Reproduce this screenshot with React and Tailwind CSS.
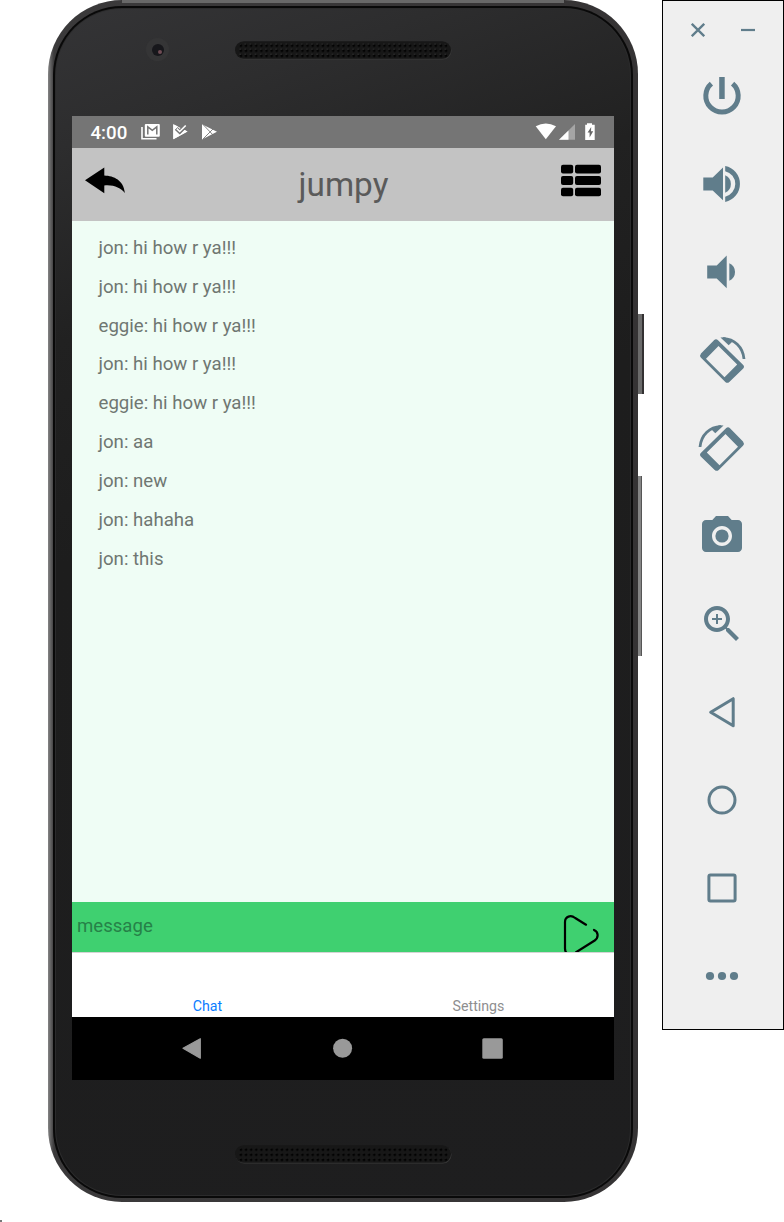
import React from "react";

const MESSAGES = [
  ["jon", "hi how r ya!!!"],
  ["jon", "hi how r ya!!!"],
  ["eggie", "hi how r ya!!!"],
  ["jon", "hi how r ya!!!"],
  ["eggie", "hi how r ya!!!"],
  ["jon", "aa"],
  ["jon", "new"],
  ["jon", "hahaha"],
  ["jon", "this"],
];

function Grille({ id, dot, glint }) {
  return (
    <svg width="217" height="19" viewBox="0 0 217 19" className="block">
      <defs>
        <pattern id={id} x="3.4" y="2" width="5.13" height="5.1" patternUnits="userSpaceOnUse">
          <circle cx="2.5" cy="2.6" r="1.35" fill={dot} />
          <rect x="1.2" y="0.6" width="1.2" height="0.8" fill={glint} />
        </pattern>
      </defs>
      <rect x="0.5" y="0.9" width="216" height="17.6" rx="8.8" fill="#3a3a3a" />
      <rect x="0" y="0.2" width="216" height="17.6" rx="8.8" fill="#171717" />
      <rect x="3.4" y="2" width="210.3" height="15.3" rx="6" fill={`url(#${id})`} />
    </svg>
  );
}

function StatusBar() {
  return (
    <div className="flex h-8 items-center justify-between bg-[#757575] pl-[18.500px] pr-[19px] text-white">
      <div className="flex items-center">
        <span className="w-[49.500px] pt-0.5 text-[18.700px] leading-[31px] font-medium">4:00</span>
        <svg width="80" height="32" viewBox="140 116 80 32" fill="none">
          <path d="M142 127V138.800H156.500" stroke="#fff" strokeWidth="1.600" />
          <rect x="144.800" y="124" width="15" height="12.700" rx="1" fill="#fff" />
          <path d="M147.800 134.500V126.800L152.300 130.300L156.800 126.800V134.500" stroke="#757575" strokeWidth="1.500" />
          <path d="M173.300 124.200L187.500 131.500L173.300 139.200Z" fill="#fff" />
          <path d="M176.300 128.200L179.700 131.600L187.500 123.800" stroke="#757575" strokeWidth="3.600" />
          <path d="M173.300 124.200L178 126.600L174.800 129.700L179.700 134.600L184.500 129.900L187.500 131.500L173.300 139.200Z" fill="#fff" />
          <path d="M176 129L179.700 132.500L186 126.300" stroke="#757575" strokeWidth="3" />
          <path d="M176.800 128.700L179.700 131.500L185.700 125.500" stroke="#fff" strokeWidth="1.600" />
          <path d="M202 124.200L217 131.800L202 139.500Z" fill="#fff" />
          <path d="M203 124.500L215 137M203 139L215 127" stroke="#757575" strokeWidth="0.900" />
        </svg>
      </div>
      <svg width="60" height="32" viewBox="535 116 60 32">
        <path d="M535.700 126.300Q545.800 120.500 556 126.300L545.800 139.200Z" fill="#fff" />
        <path d="M575 124V139.700H559Z" fill="#a5a5a5" />
        <path d="M568.500 130.400V139.700H559Z" fill="#fff" />
        <path d="M587 123.300h5v1.500h2.700v15.200h-9.500v-15.200h1.800z" fill="#fff" />
        <path d="M591.200 127l-3.600 5.600h2v5l3.600-6.300h-2.200z" fill="#666" />
      </svg>
    </div>
  );
}

function Header() {
  return (
    <header className="flex h-[73px] items-start justify-between bg-[#c3c3c3] px-[13px] pt-4">
      <svg width="42" height="32" viewBox="85 164 42 32">
        <path d="M85 180.300L104.300 167.400V175.500C114 176 123.500 180 124.900 193C120.500 188 114 184.600 104.300 185.500V193.200Z" />
      </svg>
      <h1 className="text-[33.300px] leading-[41px] text-[#5a5a5a]">jumpy</h1>
      <svg width="41" height="33" viewBox="560 164 41 33">
        <rect x="561" y="164.700" width="12.200" height="8.700" rx="2" />
        <rect x="575" y="164.700" width="26" height="8.700" rx="2" />
        <rect x="561" y="176" width="12.200" height="9" rx="2" />
        <rect x="575" y="176" width="26" height="9" rx="2" />
        <rect x="561" y="187.700" width="12.200" height="8.500" rx="2" />
        <rect x="575" y="187.700" width="26" height="8.500" rx="2" />
      </svg>
    </header>
  );
}

function Screen() {
  return (
    <div className="flex h-[964px] w-[542px] flex-col bg-black">
      <StatusBar />
      <Header />
      <main className="h-[681px] bg-[#effdf5] pt-2 pl-[26.500px]">
        {MESSAGES.map(([who, text], i) => (
          <p key={i} className="h-[38.820px] text-[18.640px] leading-[39px] text-[#6f7772]">
            {who}: {text}
          </p>
        ))}
      </main>
      <div className="flex h-[50px] justify-between overflow-hidden bg-[#3fd070] pl-[5px] pr-3">
        <span className="text-[18.600px] leading-[49px] text-[#268148]">message</span>
        <svg width="40" height="50" viewBox="562 902 40 50" fill="none" stroke="#000" strokeWidth="2.200" strokeLinecap="round" strokeLinejoin="round">
          <path d="M586 924.700L575.200 918C570.700 914.500 565 916.500 565 922V948.500C565 954 570.700 956.500 575.700 952.500L594.700 940.500C598.700 937.500 598.700 932 594 930" />
        </svg>
      </div>
      <nav className="flex h-[65px] items-end border-t border-[#d4d4d4] bg-white text-center text-[14.200px] leading-[22px]">
        <span className="flex-1 text-[#0a7cff]">Chat</span>
        <span className="flex-1 text-[#8e8e8f]">Settings</span>
      </nav>
      <div className="flex h-[63px] items-center bg-black pl-[109px]">
        <svg width="324" height="24" viewBox="181 1037 324 24" fill="#999">
          <path d="M183 1048.300L200.300 1038.700V1058.200Z" stroke="#999" strokeWidth="1.200" strokeLinejoin="round" />
          <circle cx="342.600" cy="1048.300" r="9.500" />
          <rect x="482.300" y="1038.200" width="20.500" height="20.500" rx="1.500" />
        </svg>
      </div>
    </div>
  );
}

function Phone() {
  return (
    <div className="relative ml-12 h-[1202px] w-[590px] shrink-0 rounded-[74px] bg-linear-to-r from-[#858585] via-[#3b3a3b] via-[1%] to-[#353334] pt-[6px] pr-[5px] pb-[4px] pl-[5px]">
      <div className="absolute top-[314px] left-[590px] flex h-20 w-1.5 bg-[#6b6b6b]">
        <div className="ml-auto w-0.5 bg-[#333132]" />
      </div>
      <div className="absolute top-[476px] left-[590px] h-[180px] w-1 border-r border-[#555] bg-[#858585]" />
      <div className="absolute top-0 left-[74px] h-[3px] w-[442px] bg-[#686868]" />
      <div className="h-full rounded-[69px] bg-[#090909] p-0.5">
        <div className="h-full rounded-[67px] bg-[#2b2b2c] p-px">
          <div className="flex h-full flex-col items-center rounded-[66px] bg-linear-[160deg,#343436_0%,#2d2d2e_10%,#212121_24%,#1d1d1d_40%,#1e1e1f_100%]">
            <div className="flex h-[107px] w-full items-start pt-[32px] pl-[90px]">
              <div className="-mt-[3px] flex h-[23px] w-[23px] items-center justify-center rounded-full bg-[#353536]">
                <div className="flex h-3 w-3 items-center justify-end rounded-full bg-[#17171b] pr-0.5">
                  <div className="mt-1 h-1 w-1 rounded-full bg-[#704c54]" />
                </div>
              </div>
              <div className="ml-[66px]">
                <Grille id="ear" dot="#030303" glint="#3b3b3b" />
              </div>
            </div>
            <Screen />
            <div className="pt-[65px]">
              <Grille id="mouth" dot="#020202" glint="#1d1d1d" />
            </div>
          </div>
        </div>
      </div>
    </div>
  );
}

function Tool({ children, flip }) {
  return (
    <button className="flex h-[88px] items-center justify-center pr-0.5">
      <svg width="48" height="48" viewBox="0 0 48 48" fill="currentColor" className={flip ? "-scale-x-100 overflow-visible" : "overflow-visible"}>
        {children}
      </svg>
    </button>
  );
}

function RotateGlyph() {
  return (
    <>
      <path fillRule="evenodd" d="M16 4.200Q18 2.300 20 4.200L45 28.700Q47 30.800 45 32.800L31.300 46Q29.300 47.700 27.300 46L3 21.800Q1.200 19.700 3 17.500ZM20.500 10L8 22.700L26.500 41.200L39.200 28.500Z" />
      <path d="M25 2.600C36 2.400 45 11 46 23" fill="none" stroke="currentColor" strokeWidth="2.800" />
      <path d="M22.500 1.400L30.700 9.300L34.500 5.500L27 1.300Z" />
    </>
  );
}

function Toolbar() {
  return (
    <aside className="ml-6 flex h-[1030px] w-[122px] shrink-0 flex-col border border-black bg-[#efefef] text-[#607d8b]">
      <div className="flex h-[51px] items-center justify-between pt-[7px] pr-7 pl-7">
        <svg width="14" height="14" viewBox="0 0 14 14" stroke="currentColor" strokeWidth="2.300">
          <path d="M0.800 0.800L13.200 13.200M13.200 0.800L0.800 13.200" />
        </svg>
        <svg width="14" height="14" viewBox="0 0 14 14">
          <path d="M0 7H14" stroke="currentColor" strokeWidth="2.200" />
        </svg>
      </div>
      <Tool>
        <path d="M13.400 11.600A16.200 16.200 0 1 0 34.600 11.600" fill="none" stroke="currentColor" strokeWidth="5" />
        <rect x="21.200" y="5" width="5.500" height="22" />
      </Tool>
      <Tool>
        <path d="M5.300 17.400H14.700L25 7.500V40.200L14.700 30.400H5.300Z" />
        <path d="M27.200 15.300A9.500 9.500 0 0 1 27.200 32.700Z" />
        <path d="M27.200 6A18.300 18.300 0 0 1 27.200 41.900V36.700A13.100 13.100 0 0 0 27.200 11.200Z" />
      </Tool>
      <Tool>
        <path d="M9.200 17.400H18.700L28.700 7.500V40.200L18.700 30.500H9.200Z" />
        <path d="M31.300 15.300A9.500 9.500 0 0 1 31.300 32.700Z" />
      </Tool>
      <Tool><RotateGlyph /></Tool>
      <Tool flip><RotateGlyph /></Tool>
      <Tool>
        <g transform="scale(2)">
          <circle cx="12" cy="12" r="3.300" />
          <path d="M9 2L7.170 4H4c-1.100 0-2 .9-2 2v12c0 1.100.9 2 2 2h16c1.100 0 2-.9 2-2V6c0-1.100-.9-2-2-2h-3.170L15 2H9zm3 15c-2.760 0-5-2.240-5-5s2.240-5 5-5 5 2.240 5 5-2.240 5-5 5z" />
        </g>
      </Tool>
      <Tool>
        <path transform="scale(2)" d="M15.500 14h-.79l-.28-.27C15.410 12.590 16 11.110 16 9.500 16 5.910 13.090 3 9.500 3S3 5.910 3 9.500 5.910 16 9.500 16c1.610 0 3.090-.59 4.230-1.570l.27.28v.79l5 4.990L20.490 19l-4.990-5zm-6 0C7.010 14 5 11.990 5 9.500S7.010 5 9.500 5 14 7.010 14 9.500 11.990 14 9.500 14zM12 10h-2v2H9v-2H7V9h2V7h1v2h2v1z" />
      </Tool>
      <Tool>
        <path d="M12.700 24.300L35.200 10.700V37.700Z" fill="none" stroke="currentColor" strokeWidth="3" strokeLinejoin="round" />
      </Tool>
      <Tool>
        <circle cx="24" cy="24" r="13" fill="none" stroke="currentColor" strokeWidth="3" />
      </Tool>
      <Tool>
        <rect x="10.900" y="10.900" width="26.200" height="26.200" rx="1.500" fill="none" stroke="currentColor" strokeWidth="3" />
      </Tool>
      <Tool>
        <circle cx="12" cy="24" r="4.100" />
        <circle cx="24" cy="24" r="4.100" />
        <circle cx="36" cy="24" r="4.100" />
      </Tool>
    </aside>
  );
}

export default function App() {
  return (
    <div className="flex h-[1222px] w-[784px] flex-col overflow-hidden bg-white font-['Roboto',sans-serif]">
      <div className="flex h-[1220px] items-start">
        <Phone />
        <Toolbar />
      </div>
      <div className="h-0.5 w-0.5 bg-[#777]" />
    </div>
  );
}
